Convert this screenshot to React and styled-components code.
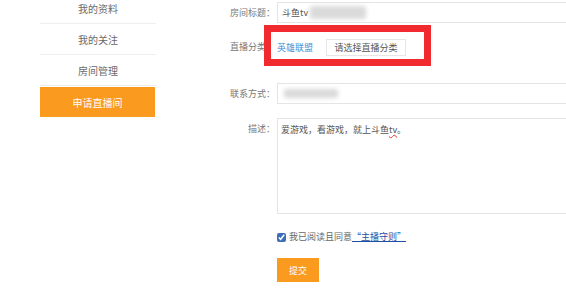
import React from "react";
import styled, { createGlobalStyle } from "styled-components";

const Global = createGlobalStyle`
  html, body {
    margin: 0;
    padding: 0;
    background: #fff;
    overflow: hidden;
  }
  body {
    font-family: "Noto Sans CJK SC", "Noto Sans", sans-serif;
    font-size: 10px;
    color: #666;
  }
`;

const Page = styled.div`
  display: flex;
  width: 566px;
  height: 288px;
  overflow: hidden;
`;

const Sidebar = styled.ul`
  list-style: none;
  margin: -7px 0 0 40px;
  padding: 0;
  width: 116px;
  flex-shrink: 0;
`;

const NavItem = styled.li`
  height: 30px;
  display: flex;
  align-items: center;
  justify-content: center;
  border-bottom: ${(p) => (p.$active ? "none" : "1px solid #eeeeee")};
  background: ${(p) => (p.$active ? "#fa9a1e" : "transparent")};
  color: ${(p) => (p.$active ? "#fff" : "#6a6a6a")};
  margin-top: ${(p) => (p.$active ? "1px" : "0")};
  width: ${(p) => (p.$active ? "115px" : "116px")};
`;

const Form = styled.form`
  margin-left: 44px;
  padding-top: 2px;
  display: flex;
  flex-direction: column;
  font-size: 9px;
`;

const Row = styled.div`
  position: relative;
  display: flex;
  align-items: ${(p) => (p.$top ? "flex-start" : "center")};
  margin-top: ${(p) => p.$mt || 0}px;
  min-height: ${(p) => p.$h || 0}px;
`;

const Label = styled.label`
  width: 75px;
  flex-shrink: 0;
  text-align: right;
  color: #777;
  padding-top: ${(p) => (p.$top ? "5px" : "0")};
  line-height: 12px;
`;

const Control = styled.div`
  margin-left: 2px;
  display: flex;
  align-items: center;
`;

const Input = styled.div`
  width: 330px;
  height: 19px;
  border: 1px solid #e4e4e4;
  display: flex;
  align-items: center;
  padding-left: 4px;
  color: #555;
  box-sizing: content-box;
`;

const Blur = styled.span`
  display: inline-block;
  width: ${(p) => p.$w}px;
  height: ${(p) => p.$h || 10}px;
  margin-left: ${(p) => p.$ml || 0}px;
  background: #dadada;
  filter: blur(2px);
  border-radius: 2px;
`;

const Textarea = styled.div`
  width: 330px;
  height: 96px;
  border: 1px solid #e4e4e4;
  padding: 5px 3px;
  box-sizing: border-box;
  color: #555;
  line-height: 12px;
`;

const Typo = styled.span`
  text-decoration: underline wavy #e33;
  text-decoration-thickness: 1px;
`;

const CategoryLink = styled.a`
  color: #3b8fd6;
  text-decoration: none;
`;

const SelectButton = styled.button`
  margin-left: 13px;
  height: 17px;
  width: 80px;
  padding: 0;
  border: 1px solid #e6e6e6;
  background: #fff;
  color: #555;
  font-family: inherit;
  font-size: 9px;
`;

const Highlight = styled.div`
  position: absolute;
  left: 64px;
  top: -12px;
  width: 167px;
  height: 41px;
  border: 7px solid #f02a2e;
  box-sizing: border-box;
  pointer-events: none;
`;

const Agree = styled.label`
  display: flex;
  align-items: center;
  margin-left: 77px;
  color: #666;
  line-height: 12px;
`;

const Check = styled.input`
  width: 9px;
  height: 9px;
  margin: 0 3px 0 0;
  accent-color: #3c6fb8;
`;

const RuleLink = styled.a`
  color: #1f4fa3;
  text-decoration: underline;
`;

const Submit = styled.button`
  margin-left: 77px;
  width: 42px;
  height: 24px;
  border: none;
  background: #fa9a1e;
  color: #fff;
  font-family: inherit;
  font-size: 9px;
  padding: 0;
`;

const navItems = ["我的资料", "我的关注", "房间管理"];

export default function App() {
  return (
    <>
      <Global />
      <Page>
        <Sidebar>
          {navItems.map((n) => (
            <NavItem key={n}>{n}</NavItem>
          ))}
          <NavItem $active>申请直播间</NavItem>
        </Sidebar>

        <Form onSubmit={(e) => e.preventDefault()}>
          <Row $h={21}>
            <Label>房间标题：</Label>
            <Control>
              <Input>
                斗鱼tv
                <Blur $w={56} $h={13} $ml={2} />
              </Input>
            </Control>
          </Row>

          <Row $mt={14} $h={20}>
            <Label>直播分类：</Label>
            <Control>
              <CategoryLink href="#">英雄联盟</CategoryLink>
              <SelectButton type="button">请选择直播分类</SelectButton>
            </Control>
            <Highlight />
          </Row>

          <Row $mt={26} $h={21}>
            <Label>联系方式：</Label>
            <Control>
              <Input>
                <Blur $w={54} $h={9} $ml={2} />
              </Input>
            </Control>
          </Row>

          <Row $mt={14} $top>
            <Label $top>描述：</Label>
            <Control>
              <Textarea>
                爱游戏，看游戏，就上斗鱼<Typo>tv</Typo>。
              </Textarea>
            </Control>
          </Row>

          <Row $mt={17} $h={12}>
            <Agree>
              <Check type="checkbox" defaultChecked />
              我已阅读且同意<RuleLink href="#">“主播守则”</RuleLink>
            </Agree>
          </Row>

          <Row $mt={15}>
            <Submit type="submit">提交</Submit>
          </Row>
        </Form>
      </Page>
    </>
  );
}
